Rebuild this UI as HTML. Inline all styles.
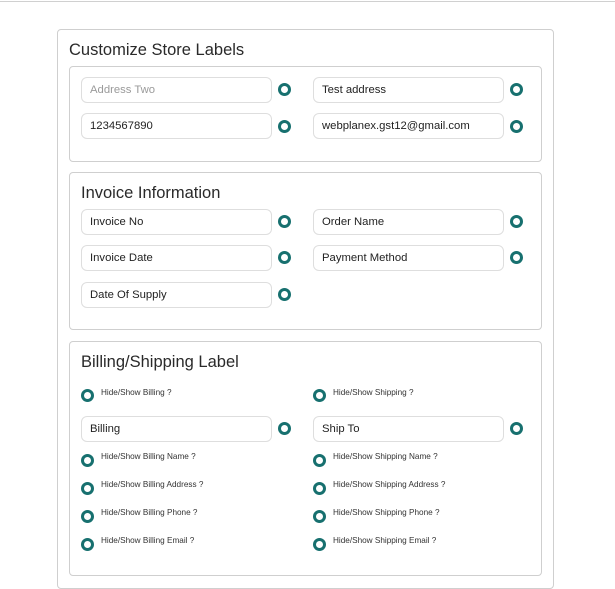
<!DOCTYPE html>
<html><head><meta charset="utf-8"><style>
*{box-sizing:border-box;margin:0;padding:0}
body{width:615px;height:581px;background:#fff;position:relative;overflow:hidden;font-family:"Liberation Sans",sans-serif;color:#222}
.a{position:absolute}
.top{left:0;top:1px;width:615px;height:1px;background:#d0d0d0}
.card{border:1px solid #cfcfcf;border-radius:4px}
.h{font-size:16.5px;color:#2a2a2a;white-space:nowrap}
.in{height:26px;border:1px solid #dedede;border-radius:6px;font-size:11.3px;line-height:24px;padding-left:8px;color:#222;width:191px}
.ph{color:#9a9a9a}
.r{width:13px;height:13px;border:3.5px solid #17706f;border-radius:50%}
.l{font-size:8.2px;color:#333;white-space:nowrap}
</style></head><body>
<div class="a top"></div>
<div class="a card" style="left:57px;top:29px;width:497px;height:560px"></div>
<div class="a h" style="left:69px;top:41px">Customize Store Labels</div>
<div class="a card" style="left:69px;top:66px;width:473px;height:96px"></div>
<div class="a in ph" style="left:81px;top:77px">Address Two</div><div class="a r" style="left:278px;top:83px"></div>
<div class="a in" style="left:313px;top:77px">Test address</div><div class="a r" style="left:510px;top:83px"></div>
<div class="a in" style="left:81px;top:113px">1234567890</div><div class="a r" style="left:278px;top:120px"></div>
<div class="a in" style="left:313px;top:113px">webplanex.gst12@gmail.com</div><div class="a r" style="left:510px;top:120px"></div>

<div class="a card" style="left:69px;top:172px;width:473px;height:158px"></div>
<div class="a h" style="left:81px;top:184px">Invoice Information</div>
<div class="a in" style="left:81px;top:209px">Invoice No</div><div class="a r" style="left:278px;top:215px"></div>
<div class="a in" style="left:313px;top:209px">Order Name</div><div class="a r" style="left:510px;top:215px"></div>
<div class="a in" style="left:81px;top:245px">Invoice Date</div><div class="a r" style="left:278px;top:251px"></div>
<div class="a in" style="left:313px;top:245px">Payment Method</div><div class="a r" style="left:510px;top:251px"></div>
<div class="a in" style="left:81px;top:282px">Date Of Supply</div><div class="a r" style="left:278px;top:288px"></div>

<div class="a card" style="left:69px;top:341px;width:473px;height:235px"></div>
<div class="a h" style="left:81px;top:353px">Billing/Shipping Label</div>
<div class="a r" style="left:81px;top:389px"></div><div class="a l" style="left:101px;top:388px">Hide/Show Billing ?</div>
<div class="a r" style="left:313px;top:389px"></div><div class="a l" style="left:333px;top:388px">Hide/Show Shipping ?</div>
<div class="a in" style="left:81px;top:416px">Billing</div><div class="a r" style="left:278px;top:422px"></div>
<div class="a in" style="left:313px;top:416px">Ship To</div><div class="a r" style="left:510px;top:422px"></div>
<div class="a r" style="left:81px;top:454px"></div><div class="a l" style="left:101px;top:452px">Hide/Show Billing Name ?</div>
<div class="a r" style="left:313px;top:454px"></div><div class="a l" style="left:333px;top:452px">Hide/Show Shipping Name ?</div>
<div class="a r" style="left:81px;top:482px"></div><div class="a l" style="left:101px;top:480px">Hide/Show Billing Address ?</div>
<div class="a r" style="left:313px;top:482px"></div><div class="a l" style="left:333px;top:480px">Hide/Show Shipping Address ?</div>
<div class="a r" style="left:81px;top:510px"></div><div class="a l" style="left:101px;top:508px">Hide/Show Billing Phone ?</div>
<div class="a r" style="left:313px;top:510px"></div><div class="a l" style="left:333px;top:508px">Hide/Show Shipping Phone ?</div>
<div class="a r" style="left:81px;top:538px"></div><div class="a l" style="left:101px;top:536px">Hide/Show Billing Email ?</div>
<div class="a r" style="left:313px;top:538px"></div><div class="a l" style="left:333px;top:536px">Hide/Show Shipping Email ?</div>
</body></html>
